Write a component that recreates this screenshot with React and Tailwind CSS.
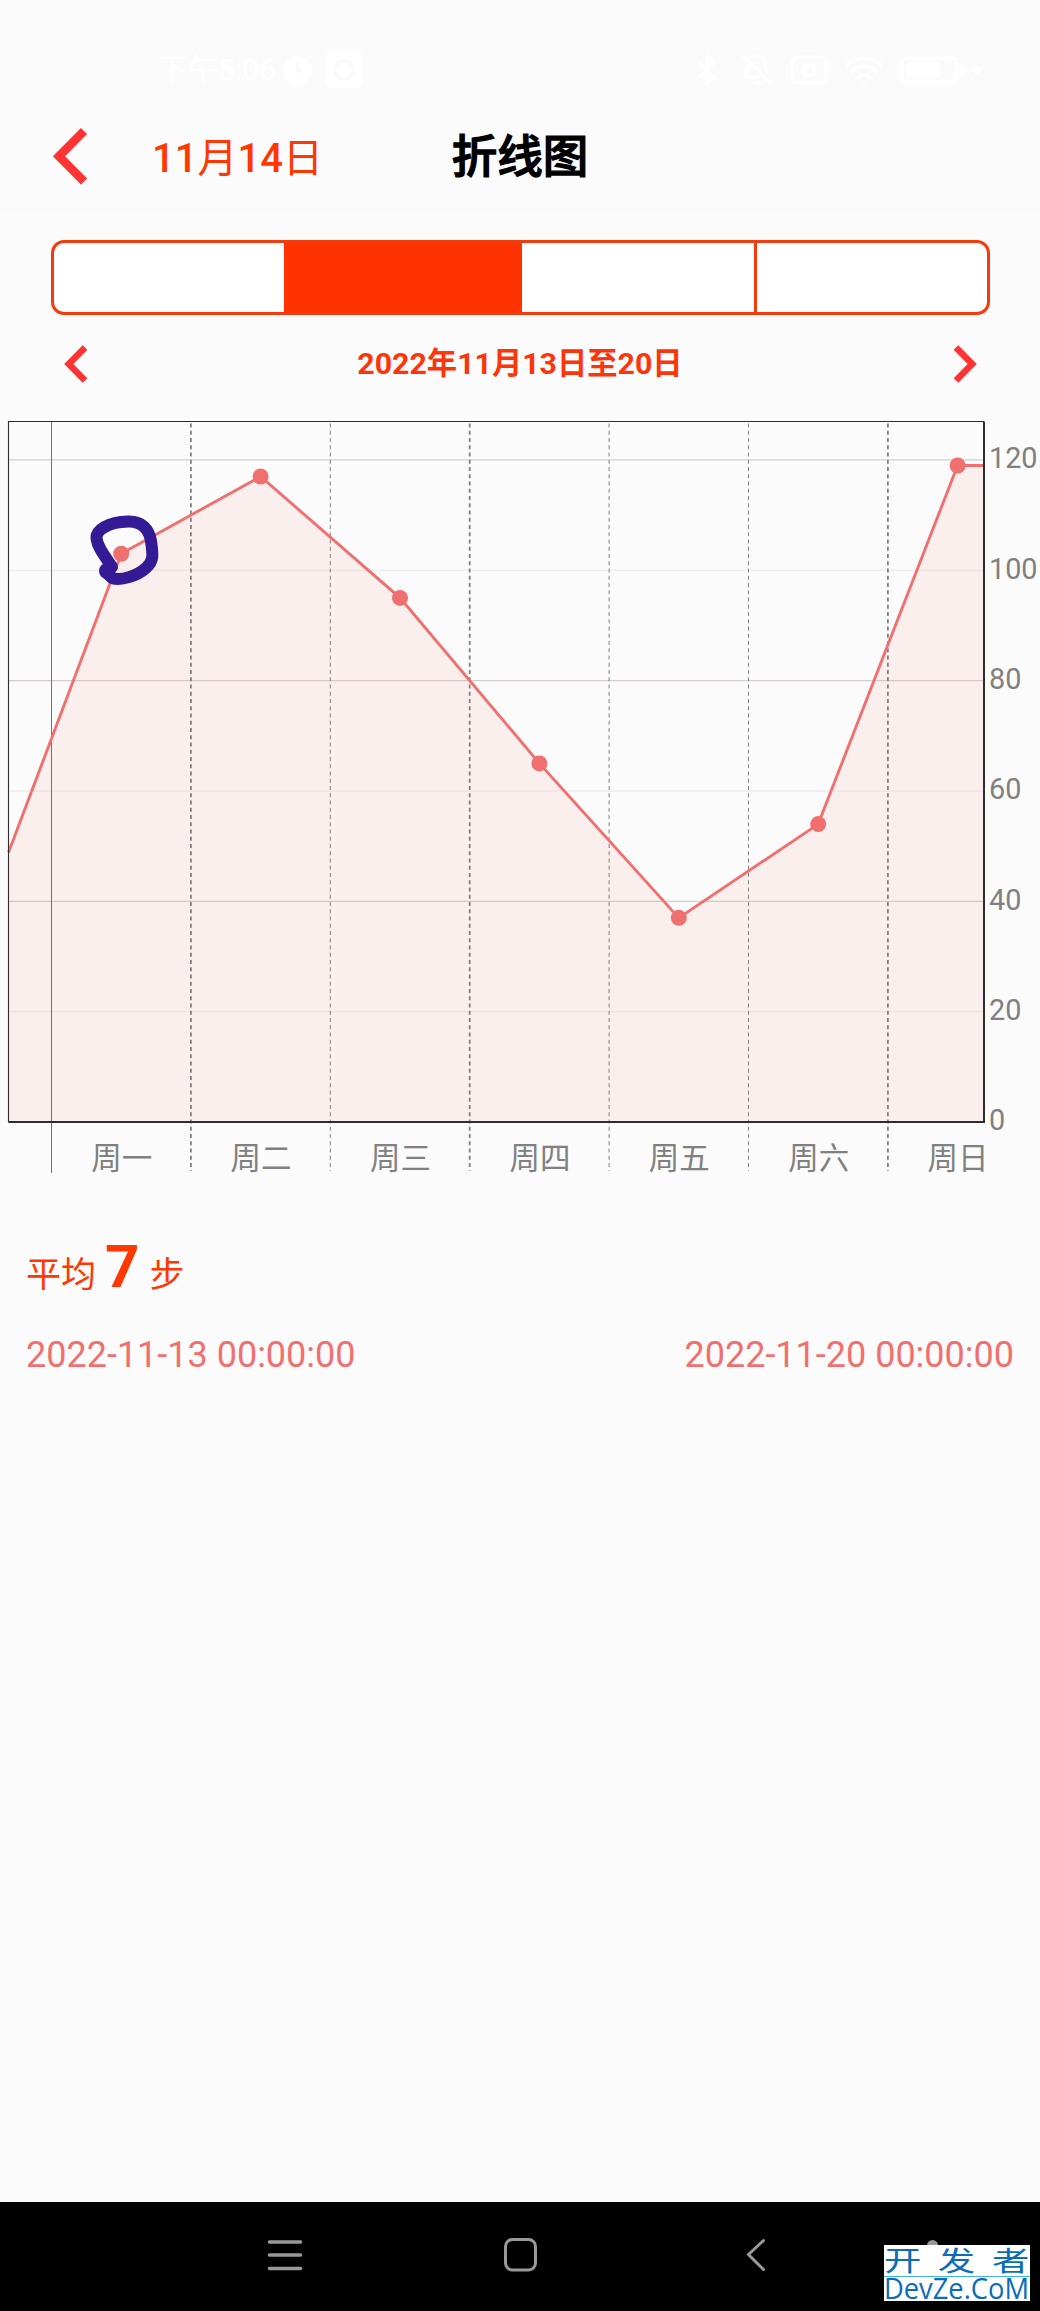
import { Bluetooth, BellOff, Wifi } from 'lucide-react';

const days = [
  { label: '周一', steps: 103 },
  { label: '周二', steps: 117 },
  { label: '周三', steps: 95 },
  { label: '周四', steps: 65 },
  { label: '周五', steps: 37 },
  { label: '周六', steps: 54 },
  { label: '周日', steps: 119 },
];

const ticks = [0, 20, 40, 60, 80, 100, 120];

const LEFT = 8.5;
const RIGHT = 984;
const TOP = 5.5;
const BASE = 706;
const FIRST = 51.5;
const STEP = 139.4;

const xOf = (i) => FIRST + STEP * (i + 0.5);
const yOf = (v) => BASE - v * 5.517;

const StatusBar = () => (
  <div className="flex h-[105px] items-start justify-between pt-[51px] pr-[56px] pl-[158px] text-white">
    <div className="flex h-[38px] items-center">
      <span className="w-[125px] text-[30px] leading-none whitespace-nowrap">下午5:06</span>
      <svg width="80" height="38" viewBox="0 0 80 38">
        <circle cx="14.5" cy="19.5" r="14.5" fill="#fff" />
        <path d="M14.5 11v9h5" stroke="#fafafa" strokeWidth="3" fill="none" />
        <rect x="43" y="1" width="36" height="36" rx="6" fill="#fff" />
        <circle cx="61" cy="19" r="9" stroke="#fafafa" strokeWidth="3" fill="none" />
      </svg>
    </div>
    <div className="flex h-[38px] items-center gap-[16px]">
      <Bluetooth size={34} />
      <BellOff size={34} />
      <svg width="38" height="30" viewBox="0 0 38 30" fill="none" stroke="#fff" strokeWidth="3">
        <rect x="2" y="2" width="34" height="26" rx="6" />
        <rect x="14" y="10" width="10" height="10" />
      </svg>
      <Wifi size={40} />
      <svg width="84" height="28" viewBox="0 0 84 28">
        <rect x="2" y="2" width="54" height="24" rx="4" stroke="#fff" strokeWidth="3" fill="none" />
        <rect x="7" y="6" width="32" height="16" fill="#fff" />
        <rect x="59" y="9" width="5" height="10" fill="#fff" />
        <circle cx="77" cy="14" r="4" fill="#fff" />
      </svg>
    </div>
  </div>
);

const Header = () => (
  <div className="grid h-[105px] grid-cols-[152px_1fr_140px_1fr_152px] items-center border-b border-[#f8f8f8]">
    <svg className="ml-[48px]" width="44" height="64" viewBox="0 0 44 64">
      <path d="M36 6 11 31.3 36 56.5" fill="none" stroke="#ff3333" strokeWidth="8.7" />
    </svg>
    <span className="pt-[4px] text-[40px] leading-none font-medium whitespace-nowrap text-[#ff3700]">
      11<span className="font-normal">月</span>14<span className="font-normal">日</span>
    </span>
    <h1 className="pt-[2px] text-center text-[45.5px] leading-none font-medium whitespace-nowrap text-black [-webkit-text-stroke:1.3px_black]">
      折线图
    </h1>
  </div>
);

const Segments = () => (
  <div className="mt-[30px] ml-[51px] flex h-[75px] w-[939px] overflow-hidden rounded-[13px] border-[3px] border-[#f43b0e] bg-white">
    <div className="w-[230px]" />
    <div className="w-[238px] bg-[#ff3300]" />
    <div className="w-[232px]" />
    <div className="w-[3px] bg-[#f43b0e]" />
    <div className="w-[230px]" />
  </div>
);

const WeekPicker = () => (
  <div className="flex h-[101px] items-center justify-between px-[60px]">
    <svg width="32" height="44" viewBox="0 0 32 44">
      <path d="M25 3.5 8.8 20 25 36.5" fill="none" stroke="#ff3333" strokeWidth="6.6" />
    </svg>
    <span className="pb-[3px] text-[30.3px] leading-none font-bold whitespace-nowrap text-[#fa360a]">2022年11月13日至20日</span>
    <svg width="32" height="44" viewBox="0 0 32 44">
      <path d="M8 3.5 24.2 20 8 36.5" fill="none" stroke="#ff3333" strokeWidth="6.6" />
    </svg>
  </div>
);

const StepChart = () => {
  const line = [
    [LEFT, 436.6],
    ...days.map((d, i) => [xOf(i), yOf(d.steps)]),
    [RIGHT, yOf(119)],
  ].map((p) => p.join(',')).join(' ');

  return (
    <svg className="block" width="1040" height="764" viewBox="0 0 1040 764">
      {ticks.slice(1).map((t) => (
        <line
          key={t}
          x1={LEFT}
          x2={RIGHT}
          y1={yOf(t)}
          y2={yOf(t)}
          stroke={t % 40 === 0 ? '#d3cfd1' : '#ececee'}
          strokeWidth="1.3"
        />
      ))}
      <polygon points={`${LEFT},${BASE} ${line} ${RIGHT},${BASE}`} fill="#ff5a50" fillOpacity="0.075" />
      <line x1={FIRST} x2={FIRST} y1={TOP} y2="757" stroke="#707070" strokeWidth="1" />
      {days.slice(1).map((d, i) => (
        <line
          key={d.label}
          x1={FIRST + STEP * (i + 1)}
          x2={FIRST + STEP * (i + 1)}
          y1={TOP + 2}
          y2="755"
          stroke="#808080"
          strokeWidth={[0, 2, 5].includes(i) ? 1.8 : 1}
          strokeDasharray="4 3.25"
        />
      ))}
      <polyline points={line} fill="none" stroke="#f07070" strokeWidth="2.9" />
      <path d={`M${LEFT} ${BASE}V${TOP}H${RIGHT}`} fill="none" stroke="#2d2d2d" strokeWidth="1.1" />
      <path d={`M${LEFT} ${BASE}H${RIGHT}V${TOP}`} fill="none" stroke="#2d2d2d" strokeWidth="2" />
      {days.map((d, i) => (
        <circle key={d.label} cx={xOf(i)} cy={yOf(d.steps)} r="8" fill="#f07070" />
      ))}
      {days.map((d, i) => (
        <text key={d.label} x={xOf(i) + 0.5} y="753" textAnchor="middle" fontSize="30.5" fill="#808080">
          {d.label}
        </text>
      ))}
      {ticks.map((t) => (
        <text key={t} x="989" y={yOf(t) + 8.3} fontSize="28.8" fill="#808080">
          {t}
        </text>
      ))}
      {/* hand-drawn ring around Monday */}
      <path
        d="M112 151C104 139 97 130 96.500 122C96 114 108 106 128 105.500C142 105 149 113 151 125C153 139 154 145 146 152C137 160 121 165 112 162L106 156"
        fill="none"
        stroke="#351a96"
        strokeWidth="12"
        strokeLinecap="round"
        strokeLinejoin="round"
      />
      <circle cx="107" cy="155" r="8" fill="#351a96" />
    </svg>
  );
};

const Summary = () => (
  <div className="px-[26px]">
    <div className="mt-[47px] flex h-[80px] items-baseline text-[35px] leading-[80px] text-[#ff3700]">
      <span>平均</span>
      <span className="ml-[9px] text-[60px] font-bold">7</span>
      <span className="ml-[10px]">步</span>
    </div>
    <div className="mt-[24px] flex justify-between text-[36px] leading-[48px] text-[#f07070]">
      <span>2022-11-13 00:00:00</span>
      <span>2022-11-20 00:00:00</span>
    </div>
  </div>
);

const Watermark = () => (
  <div className="absolute top-[43px] left-[884px] h-[56px] w-[146px] bg-white">
    <svg className="block" width="146" height="56" viewBox="0 0 146 56" fill="#0b6cb8">
      <g transform="scale(1.36 1)" fontSize="27.5">
        <text x="0" y="26">开</text>
        <text x="39.500" y="26">发</text>
        <text x="79.500" y="26">者</text>
      </g>
      <rect y="31" width="146" height="1" fill="#3db4ee" />
      <text x="0" y="54" fontSize="28.5" textLength="145" lengthAdjust="spacingAndGlyphs" className="font-['Open_Sans',sans-serif]">
        DevZe.CoM
      </text>
    </svg>
  </div>
);

const NavBar = () => (
  <div className="relative mt-auto h-[109px] bg-black">
    <svg className="block" width="1040" height="109" viewBox="0 0 1040 109" fill="none" stroke="#9c9899" strokeWidth="3">
      <path d="M269.500 40H300.500M269.500 53H300.500M269.500 66.500H300.500" strokeWidth="3.6" strokeLinecap="round" />
      <rect x="505.500" y="37.500" width="30" height="30.500" rx="7" />
      <path d="M763.500 38.500 748.500 52.500 763.500 67.500" strokeLinecap="round" />
      <circle cx="932.500" cy="43.500" r="5.500" fill="#9c9899" stroke="none" />
    </svg>
    <Watermark />
  </div>
);

const App = () => {
  return (
    <div className="flex h-[2311px] w-[1040px] flex-col overflow-hidden bg-[#fbfbfb] font-['Roboto','Noto_Sans_CJK_SC',sans-serif]">
      <StatusBar />
      <Header />
      <Segments />
      <WeekPicker />
      <StepChart />
      <Summary />
      <NavBar />
    </div>
  );
};

export default App;
